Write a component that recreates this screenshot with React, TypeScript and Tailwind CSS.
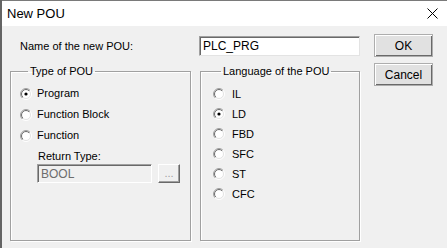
import type { ReactNode } from 'react';

const font = { fontFamily: '"Liberation Sans", Arial, sans-serif' };

const Radio = ({ checked }: { checked?: boolean }) => (
  <svg width="12" height="12" viewBox="0 0 12 12" className="shrink-0">
    <defs>
      <linearGradient id="rOuter" x1="0" y1="0" x2="1" y2="1">
        <stop offset="0.5" stopColor="#a0a0a0" />
        <stop offset="0.5" stopColor="#ffffff" />
      </linearGradient>
      <linearGradient id="rInner" x1="0" y1="0" x2="1" y2="1">
        <stop offset="0.5" stopColor="#696969" />
        <stop offset="0.5" stopColor="#e3e3e3" />
      </linearGradient>
    </defs>
    <circle cx="6" cy="6" r="5.5" fill="none" stroke="url(#rOuter)" strokeWidth="1" />
    <circle cx="6" cy="6" r="4.5" fill="#ffffff" stroke="url(#rInner)" strokeWidth="1" />
    {checked && <circle cx="6" cy="6" r="1.6" fill="#000000" />}
  </svg>
);

const RadioRow = ({ label, checked, h }: { label: string; checked?: boolean; h: string }) => (
  <div className={`flex items-center gap-[5px] ${h}`}>
    <Radio checked={checked} />
    <span>{label}</span>
  </div>
);

const Group = ({ title, className, children }: { title: string; className: string; children: ReactNode }) => (
  <fieldset
    className={`border border-[#a0a0a0] shadow-[inset_1px_1px_0_#ffffff,1px_1px_0_#ffffff] ${className}`}
  >
    <legend className="ml-[8px] px-[2px] leading-[13px]">{title}</legend>
    {children}
  </fieldset>
);

const Button = ({ label }: { label: string }) => (
  <button className="w-[59px] h-[23px] bg-[#e1e1e1] border border-[#adadad] shadow-[inset_1px_1px_0_#ffffff,inset_-1px_-1px_0_#696969] text-black text-[12px] leading-none">
    {label}
  </button>
);

export default function App() {
  return (
    <div
      className="w-[447px] h-[248px] bg-[#f0f0f0] border-l-2 border-[#646464] text-[11px] text-black flex flex-col"
      style={font}
    >
      <div className="h-[26px] bg-white border-t border-[#7a7a7a] flex items-center justify-between pl-[5px] pr-[9px]">
        <span className="text-[13px] text-black">New POU</span>
        <svg width="11" height="11" viewBox="0 0 11 11">
          <path d="M0.5 0.5 L10.5 10.5 M10.5 0.5 L0.5 10.5" stroke="#000" strokeWidth="1" />
        </svg>
      </div>

      <div className="flex gap-[14px] pl-[8px] pt-[7px]">
        <div className="w-[350px] flex flex-col">
          <div className="flex h-[23px] items-start">
            <span className="w-[189px] pl-[10px] pt-[7px] leading-[13px]">Name of the new POU:</span>
            <div className="mt-[3px] w-[161px] h-[20px] bg-white border border-t-[#a0a0a0] border-l-[#a0a0a0] border-r-[#e3e3e3] border-b-[#e3e3e3] shadow-[inset_1px_1px_0_#696969] flex items-center pl-[3px] text-[12px]">
              PLC_PRG
            </div>
          </div>

          <div className="flex gap-[9px] mt-[9px]">
            <Group title="Type of POU" className="w-[181px] h-[176px] pl-[9px]">
              <div className="pt-[5px]">
                <RadioRow label="Program" checked h="h-[21px]" />
                <RadioRow label="Function Block" h="h-[21px]" />
                <RadioRow label="Function" h="h-[21px]" />
                <div className="pl-[18px] mt-[4px] leading-[13px]">Return Type:</div>
                <div className="flex gap-[6px] pl-[17px] mt-[1px]">
                  <div className="w-[115px] h-[19px] bg-[#f0f0f0] border border-t-[#a0a0a0] border-l-[#a0a0a0] border-r-white border-b-white shadow-[inset_1px_1px_0_#696969] flex items-center pl-[3px] text-[#6d6d6d] text-[12px]">
                    BOOL
                  </div>
                  <div className="w-[22px] h-[19px] bg-[#f0f0f0] border border-t-white border-l-white border-r-[#696969] border-b-[#696969] shadow-[inset_-1px_-1px_0_#a0a0a0] flex items-end justify-center pb-[3px] text-[#a0a0a0] leading-none">
                    ...
                  </div>
                </div>
              </div>
            </Group>

            <Group title="Language of the POU" className="w-[160px] h-[176px] pl-[12px]">
              <div className="pt-[6px] [&>div]:gap-[7px]">
                <RadioRow label="IL" h="h-[20px]" />
                <RadioRow label="LD" checked h="h-[20px]" />
                <RadioRow label="FBD" h="h-[20px]" />
                <RadioRow label="SFC" h="h-[20px]" />
                <RadioRow label="ST" h="h-[20px]" />
                <RadioRow label="CFC" h="h-[20px]" />
              </div>
            </Group>
          </div>
        </div>

        <div className="flex flex-col gap-[6px] pt-[1px]">
          <Button label="OK" />
          <Button label="Cancel" />
        </div>
      </div>
    </div>
  );
}
